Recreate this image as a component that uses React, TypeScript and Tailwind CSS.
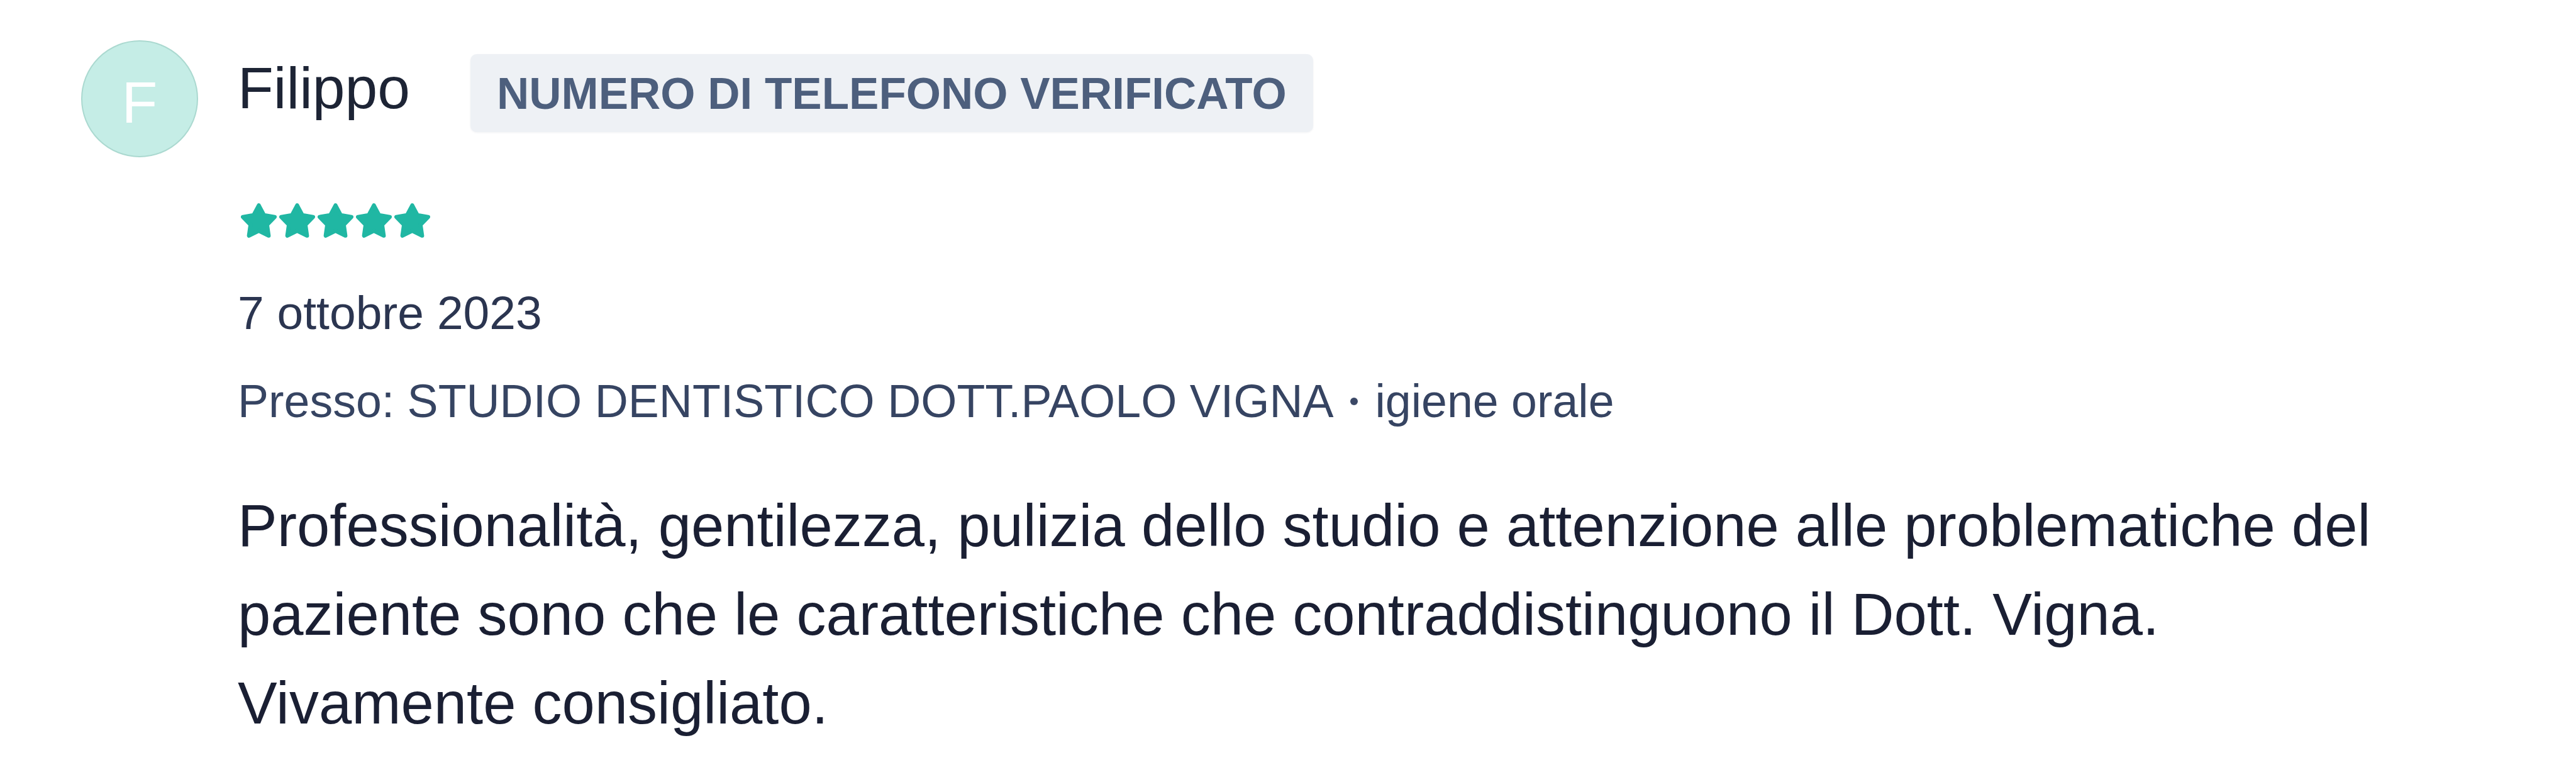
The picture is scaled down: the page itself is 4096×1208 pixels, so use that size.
/**
 * ReviewCard — recensione paziente con badge di verifica
 */

const review = {
  initial: 'F',
  name: 'Filippo',
  badge: 'NUMERO DI TELEFONO VERIFICATO',
  rating: 5,
  date: '7 ottobre 2023',
  place: 'STUDIO DENTISTICO DOTT.PAOLO VIGNA',
  service: 'igiene orale',
  text:
    'Professionalità, gentilezza, pulizia dello studio e attenzione alle problematiche del paziente sono che le caratteristiche che contraddistinguono il Dott. Vigna. Vivamente consigliato.',
}

// stella arrotondata (punte smussate con stroke round)
function Star() {
  return (
    <svg viewBox="1.3 1.4 21.4 20.5" className="w-[57px] h-[55px]" fill="#20b7a3">
      <polygon
        points="12,2.6 15.06,8.39 21.51,9.51 16.95,14.21 17.88,20.69 12,17.8 6.12,20.69 7.05,14.21 2.49,9.51 8.94,8.39"
        stroke="#20b7a3"
        strokeWidth="2.4"
        strokeLinejoin="round"
      />
    </svg>
  )
}

export default function App() {
  return (
    <div className="w-[4096px] h-[1208px] bg-white pl-[129px] pt-[64px] flex items-start font-['Liberation_Sans',Arial,sans-serif]">
      {/* Avatar */}
      <div className="w-[186px] h-[186px] shrink-0 rounded-full bg-[#c5ede6] border-2 border-[#abd9d0] flex items-center justify-center">
        <span className="text-[93px] leading-none text-white mt-[12px]">{review.initial}</span>
      </div>

      <div className="ml-[63px] flex flex-col">
        {/* Nome + badge */}
        <div className="mt-[22px] flex items-start">
          <span className="mt-[8px] text-[93px] leading-none text-[#1d2435]">{review.name}</span>
          <span className="ml-[96px] h-[124px] px-[42px] flex items-center rounded-[10px] bg-[#eef1f5] shadow-[0_1px_3px_rgba(30,40,60,0.06)] text-[71px] font-bold leading-none text-[#4d5f7d]">
            {review.badge}
          </span>
        </div>

        {/* Stelle */}
        <div className="mt-[113px] ml-[5px] flex gap-[4px]">
          {Array.from({ length: review.rating }).map((_, i) => (
            <Star key={i} />
          ))}
        </div>

        {/* Data */}
        <p className="mt-[82px] text-[75px] leading-none text-[#2b3550]">{review.date}</p>

        {/* Presso */}
        <p className="mt-[66px] text-[73.5px] leading-none text-[#364462] flex items-center whitespace-nowrap">
          <span>Presso: {review.place}</span>
          <span className="mx-[27px] inline-block w-[12px] h-[12px] rounded-full bg-[#3b4866]" />
          <span>{review.service}</span>
        </p>

        {/* Testo recensione */}
        <p className="mt-[90px] w-[3460px] text-[94px] leading-[141px] text-[#1a1f33]">{review.text}</p>
      </div>
    </div>
  )
}
